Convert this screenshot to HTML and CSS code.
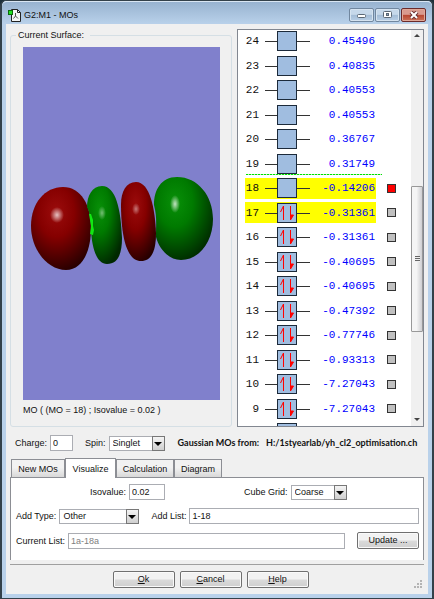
FILE: index.html
```
<!DOCTYPE html>
<html lang="en">

<head>
    <meta charset="UTF-8">
    <meta name="viewport" content="width=device-width, initial-scale=1.0">
    <title>G2:M1 - MOs</title>
    <link rel="stylesheet" href="styles.css">
</head>

<body>
    <div class="window">
        <header class="titlebar">
            <svg class="app-icon" width="13" height="14" viewBox="0 0 13 14">
                <path d="M3.5 1.5h6l3 3v9h-9z" fill="#f4f6f6" stroke="#222"/>
                <path d="M9.5 1.5v3h3" fill="none" stroke="#222"/>
                <path d="M7.5 5v3l-2 2.5M7.5 8l2.5 2.5" fill="none" stroke="#555"/>
                <rect x="0.5" y="2.5" width="4" height="4" fill="#1fe01f" stroke="#0a6a0a"/>
            </svg>
            <h1>G2:M1 - MOs</h1>
            <button class="win-btn" type="button" aria-label="Minimize">
                <svg width="10" height="8" viewBox="0 0 10 8"><rect x="0.5" y="3.5" width="8" height="3" rx="1" fill="#fff" stroke="#5b6774"/></svg>
            </button>
            <button class="win-btn" type="button" aria-label="Maximize">
                <svg width="10" height="8" viewBox="0 0 10 8"><rect x="0.5" y="0.5" width="8" height="6" rx="1" fill="#fff" stroke="#5b6774"/><rect x="3.5" y="2.5" width="2" height="2" fill="#8da6c0" stroke="#5b6774"/></svg>
            </button>
            <button class="win-btn win-close" type="button" aria-label="Close">
                <svg width="10" height="8" viewBox="0 0 10 8"><path d="M2 1l6 6M8 1l-6 6" stroke="#6b3030" stroke-width="4"/><path d="M2 1l6 6M8 1l-6 6" stroke="#fff" stroke-width="2"/></svg>
            </button>
        </header>

        <form class="client">
            <div class="top">
                <fieldset class="surface">
                    <legend>Current Surface:</legend>
                    <svg class="view" viewBox="0 0 197 353">
                        <defs>
                            <radialGradient id="red" cx="0.42" cy="0.3" r="0.75">
                                <stop offset="0" stop-color="#9c0c0c"/>
                                <stop offset="0.4" stop-color="#850000"/>
                                <stop offset="1" stop-color="#240000"/>
                            </radialGradient>
                            <radialGradient id="green" cx="0.36" cy="0.3" r="0.75">
                                <stop offset="0" stop-color="#089008"/>
                                <stop offset="0.4" stop-color="#007a00"/>
                                <stop offset="1" stop-color="#002800"/>
                            </radialGradient>
                            <radialGradient id="shine">
                                <stop offset="0" stop-color="#fff" stop-opacity="0.75"/>
                                <stop offset="1" stop-color="#fff" stop-opacity="0"/>
                            </radialGradient>
                        </defs>
                        <path d="M40 140C22 140 8 156 8 179C8 202 24 223 43 223C60 223 68 203 68 181C68 158 58 140 40 140Z" fill="url(#red)"/>
                        <path d="M79 139C69 139 64 149 64 160Q68 167 68 183C69 202 74 217 84 217C95 217 99 207 99 191C98 163 93 139 79 139Z" fill="url(#green)"/>
                        <path d="M66 167l2 0 2 6 0 6 1 4-1 5-3-1 1-8z" fill="#12e812"/>
                        <path d="M113 135C103 135 98 145 98 157C98 184 102 214 118 214C129 214 133 203 133 186C132 162 127 135 113 135Z" fill="url(#red)"/>
                        <path d="M154 130C138 130 131 143 131 158C134 170 133 176 133 190C136 202 146 213 158 213C176 213 190 195 190 172C190 149 175 130 154 130Z" fill="url(#green)"/>
                        <ellipse cx="34" cy="168" rx="7" ry="8" fill="url(#shine)"/>
                        <ellipse cx="79" cy="166" rx="4" ry="7" fill="url(#shine)" opacity="0.6"/>
                        <ellipse cx="113" cy="162" rx="4" ry="6" fill="url(#shine)" opacity="0.6"/>
                        <ellipse cx="152" cy="157" rx="5" ry="9" fill="url(#shine)"/>
                    </svg>
                    <p class="caption">MO ( (MO = 18) ; Isovalue = 0.02 )</p>
                </fieldset>

                <div class="levels">
                    <ol id="orbitals"></ol>
                    <div class="scrollbar">
                        <span class="arrow up"></span>
                        <span class="thumb"></span>
                        <span class="arrow down"></span>
                    </div>
                </div>
            </div>

            <div class="row molecule">
                <label for="charge">Charge:</label>
                <input class="w-charge" id="charge" type="text" value="0">
                <label class="spin" for="spin">Spin:</label>
                <span class="combo">
                    <select id="spin"><option>Singlet</option></select>
                </span>
                <span class="source">Gaussian MOs from:</span>
                <span class="source path">H:/1styearlab/yh_cl2_optimisation.ch</span>
            </div>

            <div class="tabs" role="tablist">
                <button type="button" role="tab" class="tab w-new">New MOs</button>
                <button type="button" role="tab" class="tab active" aria-selected="true">Visualize</button>
                <button type="button" role="tab" class="tab w-calc">Calculation</button>
                <button type="button" role="tab" class="tab w-diag">Diagram</button>
            </div>

            <div class="panel" role="tabpanel">
                <div class="row iso">
                    <label for="isovalue">Isovalue:</label>
                    <input class="w-iso" id="isovalue" type="text" value="0.02">
                    <label class="grid-label" for="cube">Cube Grid:</label>
                    <span class="combo">
                        <select id="cube"><option>Coarse</option></select>
                    </span>
                </div>
                <div class="row">
                    <label for="addtype">Add Type:</label>
                    <span class="combo wide">
                        <select id="addtype"><option>Other</option></select>
                    </span>
                    <label class="add-list" for="addlist">Add List:</label>
                    <input class="grow" id="addlist" type="text" value="1-18">
                </div>
                <div class="row">
                    <label for="current">Current List:</label>
                    <input class="grow readonly" id="current" type="text" value="1a-18a" readonly>
                    <button class="btn update" type="button">Update ...</button>
                </div>
            </div>

            <footer class="actions">
                <button class="btn" type="button"><u>O</u>k</button>
                <button class="btn" type="button"><u>C</u>ancel</button>
                <button class="btn" type="button"><u>H</u>elp</button>
                <svg class="grip" width="8" height="8" viewBox="0 0 8 8" fill="#b4b4b4">
                    <path d="M6 0h2v2h-2zM3 3h2v2h-2zM6 3h2v2h-2zM0 6h2v2h-2zM3 6h2v2h-2zM6 6h2v2h-2z"/>
                </svg>
            </footer>
        </form>
    </div>

    <script src="script.js"></script>
</body>

</html>
```
FILE: styles.css
```
*,
*::before,
*::after {
    box-sizing: border-box;
}

body {
    margin: 0;
    background: #1c2f3a;
    font: 9px/14px "Liberation Sans", Arial, sans-serif;
    color: #111;
}

input,
select,
button {
    font: inherit;
    color: inherit;
    margin: 0;
    outline: 0;
}

.window {
    height: 100vh;
    display: flex;
    flex-direction: column;
    padding: 0 4px 4px;
    border: 1px solid #33414a;
    border-width: 1px 2px 1px 2px;
    border-radius: 6px 6px 0 0;
    background: #b9d1ea;
}

/* title bar */

.titlebar {
    display: flex;
    height: 23px;
    flex: none;
    margin: 0 -4px;
    padding: 6px 6px 0 6px;
    border-top: 1px solid #d9e6f3;
    border-radius: 5px 5px 0 0;
    background: linear-gradient(#98b3d0, #b9d1ea);
}

.titlebar h1 {
    flex: 1;
    margin: 0 0 0 3px;
    font-size: 9px;
    line-height: 14px;
    font-weight: normal;
}

.win-btn {
    width: 25px;
    height: 14px;
    margin-left: 1px;
    padding: 0;
    display: flex;
    align-items: center;
    justify-content: center;
    border: 1px solid #71879f;
    border-radius: 2px;
    background: linear-gradient(#c6d8ea 45%, #a3bcd6 50%, #b8cfe6);
    box-shadow: inset 0 0 0 1px #d5e3f0;
}

.win-close {
    border-color: #6b2b2b;
    background: linear-gradient(#d99a8e 45%, #b8452f 50%, #cb7259);
    box-shadow: inset 0 0 0 1px #e0a898;
}

.client {
    flex: 1;
    min-height: 0;
    display: flex;
    flex-direction: column;
    padding: 5px 4px 0;
    background: #f0f0f0;
}

.top {
    flex: 1;
    min-height: 0;
    display: grid;
    grid-template-columns: minmax(0, 222fr) minmax(0, 187fr);
    grid-template-rows: minmax(0, 1fr);
    gap: 5px;
}

.surface {
    min-width: 0;
    display: flex;
    flex-direction: column;
    margin: 0;
    padding: 6px 11px 9px 12px;
    border: 1px solid #d5dfe5;
    border-radius: 3px;
}

.surface legend {
    margin-left: -7px;
    padding: 0 6px 0 2px;
    line-height: 12px;
}

.view {
    flex: 1;
    min-height: 0;
    width: 100%;
    background: #8080cc;
}

.caption {
    margin: 3px 0 0;
}

/* orbital levels */

.levels {
    min-width: 0;
    display: flex;
    border: 1px solid #828790;
    background: #fff;
    overflow: hidden;
}

#orbitals {
    flex: 1;
    margin: -1px 0 0;
    padding: 0 0 0 7px;
    list-style: none;
    font: 11px/20px "Liberation Mono", monospace;
}

.level {
    display: flex;
    align-items: center;
    height: 24px;
}

.level:nth-child(even) {
    height: 25px;
}

.level label {
    display: flex;
    align-items: center;
    width: 131px;
    height: 21px;
}

.level.marked label {
    background: #ff0;
}

.level.lumo {
    position: relative;
}

.level.lumo::before {
    content: "";
    position: absolute;
    left: 1px;
    right: 29px;
    top: -2px;
    height: 1px;
    background: repeating-linear-gradient(90deg, #00e000 0 2px, #b0f5b0 2px 3px);
}

.num {
    width: 14px;
    text-align: right;
}

.box {
    width: 45px;
    height: 20px;
    margin-left: 6px;
}

.energy {
    flex: 1;
    padding-right: 1px;
    text-align: right;
    color: #00f;
}

.show {
    appearance: none;
    width: 9px;
    height: 9px;
    margin-left: 11px;
    border: 1px solid #333;
    background: #c0c0c0;
}

.show:checked {
    background: #f00;
}

.scrollbar {
    width: 12px;
    display: flex;
    flex-direction: column;
    align-items: center;
    background: #f0f0f0;
}

.arrow {
    width: 0;
    border: 3px solid transparent;
}

.up {
    margin-top: 4px;
    border-bottom-color: #444;
    border-top-width: 0;
}

.down {
    margin: auto 0 5px;
    border-top-color: #444;
    border-bottom-width: 0;
}

.thumb {
    width: 12px;
    height: 146px;
    margin-top: 149px;
    border: 1px solid #999;
    border-radius: 1px;
    background: repeating-linear-gradient(#666 0 1px, #eee 1px 2px) center / 5px 6px no-repeat, linear-gradient(90deg, #f5f5f5 45%, #cfcfd2);
}

/* form rows */

.row {
    display: flex;
    align-items: center;
    gap: 3px;
}

.row label {
    white-space: nowrap;
}

.row input {
    height: 16px;
    min-width: 0;
    padding: 0 2px;
    border: 1px solid #abadb3;
    background: #fff;
}

.row .readonly {
    color: #808080;
}

.row .grow {
    flex: 1;
}

.molecule {
    padding: 8px 4px 7px 5px;
}

.w-charge {
    width: 23px;
}

.w-iso {
    width: 36px;
}

.spin {
    margin-left: 9px;
}

.combo {
    position: relative;
    width: 56px;
    height: 15px;
    flex: none;
}

.combo.wide {
    width: 80px;
}

.combo select {
    appearance: none;
    display: block;
    width: 100%;
    height: 15px;
    padding: 0 14px 0 3px;
    border: 1px solid #abadb3;
    border-radius: 0;
    background: #fff;
    line-height: 13px;
}

.combo::before {
    content: "";
    position: absolute;
    right: 0;
    top: 0;
    width: 13px;
    height: 15px;
    border: 1px solid #777;
    background: linear-gradient(#f4f4f4, #cfcfcf);
    pointer-events: none;
}

.combo::after {
    content: "";
    position: absolute;
    right: 3px;
    top: 6px;
    border: solid transparent;
    border-width: 4px 4px 0;
    border-top-color: #000;
    pointer-events: none;
}

.source {
    margin-left: 10px;
    white-space: nowrap;
    font-family: Lato, sans-serif;
    font-weight: bold;
}

.source.path {
    flex: 1;
    min-width: 0;
    margin-left: 4px;
    overflow: hidden;
}

/* tabs */

.tabs {
    display: flex;
    align-items: flex-end;
    padding-left: 1px;
}

.tab {
    width: 51px;
    height: 18px;
    padding: 0;
    border: 1px solid #8c8e94;
    border-bottom: 0;
    background: linear-gradient(#f2f2f2 45%, #d8d8d8);
}

.tab.active {
    height: 20px;
    margin-bottom: -1px;
    background: #fff;
    z-index: 1;
}

.w-new {
    width: 54px;
}

.w-calc {
    width: 58px;
}

.w-diag {
    width: 48px;
}

.panel {
    display: flex;
    flex-direction: column;
    gap: 8px;
    padding: 6px 4px 11px 5px;
    border: 1px solid #8c8e94;
    border-bottom: 0;
    background: #fff;
}

.iso {
    padding-left: 74px;
}

.grid-label {
    margin-left: 76px;
}

.add-list {
    margin-left: 9px;
}

.btn {
    width: 62px;
    height: 17px;
    padding: 0;
    border: 1px solid #707070;
    border-radius: 2px;
    background: linear-gradient(#f2f2f2 48%, #dadada 52%, #cfcfcf);
    box-shadow: inset 0 0 0 1px #fafafa;
    line-height: 13px;
}

.update {
    margin-left: 9px;
}

.actions {
    position: relative;
    display: flex;
    justify-content: center;
    gap: 5px;
    margin-top: 4px;
    padding: 6px 13px 6px 0;
    border-top: 1px solid #a0a0a0;
}

.grip {
    position: absolute;
    right: 2px;
    bottom: 6px;
}
```
FILE: script.js
```
// [number, energy, occupied]
var orbitals = [
    [24, '0.45496', false],
    [23, '0.40835', false],
    [22, '0.40553', false],
    [21, '0.40553', false],
    [20, '0.36767', false],
    [19, '0.31749', false],
    [18, '-0.14206', false],
    [17, '-0.31361', true],
    [16, '-0.31361', true],
    [15, '-0.40695', true],
    [14, '-0.40695', true],
    [13, '-0.47392', true],
    [12, '-0.77746', true],
    [11, '-0.93313', true],
    [10, '-7.27043', true],
    [9, '-7.27043', true]
];

function boxIcon(occupied) {
    var arrows = '<path d="M18.5 17V3l-3 6" fill="none" stroke="#f00"/><path d="M25.5 3v14l3-5h-3" fill="#f00" stroke="#f00"/>';
    return `<svg class="box" viewBox="0 0 45 20">
        <path d="M0 10.5h45" stroke="#333"/>
        <rect x="12.5" y="0.5" width="19" height="19" fill="#a0bde0" stroke="#1c2a3a"/>
        ${occupied ? arrows : ''}
    </svg>`;
}

function showOrbitals() {
    var html = '';
    for (let [num, energy, occupied] of orbitals) {
        var marked = num == 18 || num == 17;
        html += `<li class="level ${marked ? 'marked' : ''} ${num == 18 ? 'lumo' : ''}">
            <label for="mo${num}">
                <span class="num">${num}</span>${boxIcon(occupied)}<span class="energy">${energy}</span>
            </label>
            ${num <= 18 ? `<input class="show" id="mo${num}" type="checkbox" ${num == 18 ? 'checked' : ''}>` : ''}
        </li>`;
    }
    // top edge of the next box, cut by the end of the list
    html += `<li class="level"><span class="num"></span>${boxIcon(true)}</li>`;
    document.getElementById('orbitals').innerHTML = html;
}

showOrbitals();
```
